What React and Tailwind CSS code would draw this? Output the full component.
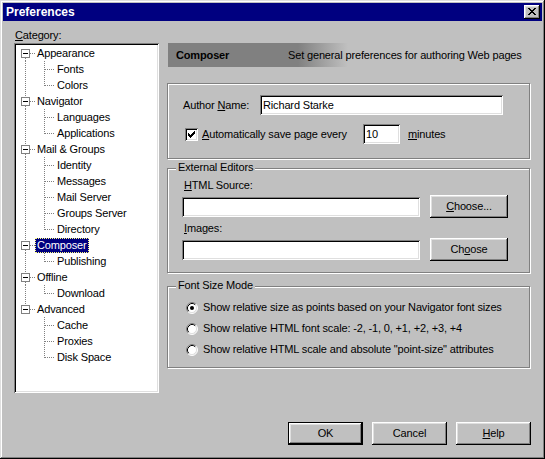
import React from "react";

// Win95 bevels
const raised =
  "shadow-[inset_-1px_-1px_#000,inset_1px_1px_#fff,inset_-2px_-2px_#808080,inset_2px_2px_#dfdfdf]";
const sunken =
  "shadow-[inset_1px_1px_#808080,inset_-1px_-1px_#fff,inset_2px_2px_#000,inset_-2px_-2px_#dfdfdf]";

const tree = [
  { label: "Appearance", children: ["Fonts", "Colors"] },
  { label: "Navigator", children: ["Languages", "Applications"] },
  { label: "Mail & Groups", children: ["Identity", "Messages", "Mail Server", "Groups Server", "Directory"] },
  { label: "Composer", children: ["Publishing"], selected: true },
  { label: "Offline", children: ["Download"] },
  { label: "Advanced", children: ["Cache", "Proxies", "Disk Space"] },
];

const CHECK = ["......#", ".....##", "#...###", "##.###.", "#####..", ".###...", "..#...."];
const CROSS = ["##....##", ".##..##.", "..####..", "...##...", "..####..", ".##..##.", "##....##"];

function Pixels({ rows, color = "#000", x = 0, y = 0 }) {
  return rows.flatMap((row, j) =>
    [...row].map((c, i) =>
      c === "#" ? <rect key={`${i}-${j}`} x={x + i} y={y + j} width="1" height="1" fill={color} /> : null
    )
  );
}

// small helper for an underlined access key
const U = ({ children }) => <span className="underline decoration-1 underline-offset-[1px]">{children}</span>;

function Dots({ x1, y1, x2, y2 }) {
  return <line x1={x1} y1={y1} x2={x2} y2={y2} stroke="#808080" strokeDasharray="1 1" shapeRendering="crispEdges" />;
}

function RootRow({ node, first, last }) {
  return (
    <div className="flex h-[16px] items-center">
      <svg width="19" height="16" className="shrink-0">
        {!first && <Dots x1={9.5} y1={0} x2={9.5} y2={4} />}
        {!last && <Dots x1={9.5} y1={13} x2={9.5} y2={16} />}
        <Dots x1={14} y1={8.5} x2={19} y2={8.5} />
        <rect x="5.5" y="4.5" width="8" height="8" fill="#fff" stroke="#808080" shapeRendering="crispEdges" />
        <rect x="7" y="8" width="5" height="1" fill="#000" />
      </svg>
      <span
        className={
          node.selected
            ? "h-[15px] px-[2px] leading-[15px] bg-[#000080] text-white outline outline-1 outline-dotted outline-[#ffff80] -outline-offset-1"
            : "h-[15px] px-[2px] leading-[15px]"
        }
      >
        {node.label}
      </span>
    </div>
  );
}

function ChildRow({ label, lastChild, lastRoot }) {
  return (
    <div className="flex h-[16px] items-center">
      <svg width="39" height="16" className="shrink-0">
        {!lastRoot && <Dots x1={9.5} y1={0} x2={9.5} y2={16} />}
        <Dots x1={28.5} y1={0} x2={28.5} y2={lastChild ? 9 : 16} />
        <Dots x1={29} y1={8.5} x2={38} y2={8.5} />
      </svg>
      <span className="h-[15px] px-[2px] leading-[15px]">{label}</span>
    </div>
  );
}

function Radio({ checked }) {
  return (
    <svg width="12" height="12" className="shrink-0">
      <circle cx="6" cy="6" r="5" fill="#fff" />
      <path d="M2.11 9.89 A5.5 5.5 0 0 1 9.89 2.11" fill="none" stroke="#808080" />
      <path d="M9.89 2.11 A5.5 5.5 0 0 1 2.11 9.89" fill="none" stroke="#fff" />
      <path d="M2.82 9.18 A4.5 4.5 0 0 1 9.18 2.82" fill="none" stroke="#000" />
      <path d="M9.18 2.82 A4.5 4.5 0 0 1 2.82 9.18" fill="none" stroke="#dfdfdf" />
      {checked && <circle cx="6" cy="6" r="2" fill="#000" />}
    </svg>
  );
}

function Button({ children, width = "w-[75px]", isDefault }) {
  return (
    <div
      className={
        isDefault
          ? `${width} h-[23px] flex items-center justify-center border border-black ${raised}`
          : `${width} h-[23px] flex items-center justify-center ${raised}`
      }
    >
      {children}
    </div>
  );
}

function Field({ width, value }) {
  return <div className={`${width} h-[20px] bg-white pl-[3px] flex items-center ${sunken}`}>{value}</div>;
}

function Group({ title, className, children }) {
  return (
    <div className={`relative border border-[#808080] shadow-[inset_1px_1px_#fff,1px_1px_#fff] ${className}`}>
      {title && <span className="absolute left-[8px] top-[-8px] bg-[#c0c0c0] px-[2px]">{title}</span>}
      {children}
    </div>
  );
}

export default function App() {
  return (
    <div className="w-[545px] h-[459px] bg-[#c0c0c0] p-[3px] flex flex-col font-['Liberation_Sans',Arial,sans-serif] text-[11px] leading-[13px] tracking-[-0.15px] text-black shadow-[inset_-1px_-1px_#000,inset_1px_1px_#dfdfdf,inset_-2px_-2px_#808080,inset_2px_2px_#fff]">
      {/* title bar */}
      <div className="h-[18px] shrink-0 bg-[#000080] flex items-center justify-between pl-[3px] pr-[2px]">
        <span className="text-white font-bold text-[12px] tracking-normal">Preferences</span>
        <div className={`w-[16px] h-[14px] bg-[#c0c0c0] ${raised}`}>
          <svg width="16" height="14">
            <Pixels rows={CROSS} x={4} y={3} />
          </svg>
        </div>
      </div>

      <div className="flex pl-[11px] pt-[8px]">
        {/* category tree */}
        <div className="w-[145px] shrink-0">
          <div className="ml-px">
            <U>C</U>ategory:
          </div>
          <div className={`mt-px h-[350px] bg-white pt-[2px] pl-[2px] ${sunken}`}>
            {tree.map((node, i) => (
              <React.Fragment key={node.label}>
                <RootRow node={node} first={i === 0} last={i === tree.length - 1} />
                {node.children.map((c, j) => (
                  <ChildRow
                    key={c}
                    label={c}
                    lastChild={j === node.children.length - 1}
                    lastRoot={i === tree.length - 1}
                  />
                ))}
              </React.Fragment>
            ))}
          </div>
        </div>

        {/* composer panel */}
        <div className="ml-[8px] w-[363px] shrink-0 pt-[14px]">
          <div className="ml-px h-[24px] flex items-center bg-[linear-gradient(to_right,#808080_130px,#c0c0c0_180px)]">
            <span className="w-[120px] pl-[8px] font-bold">Composer</span>
            <span>Set general preferences for authoring Web pages</span>
          </div>

          <Group className="mt-[16px] h-[76px] pt-[11px] pl-[15px]">
            <div className="flex items-center h-[20px]">
              <span className="w-[77px]">
                Author <U>N</U>ame:
              </span>
              <Field width="w-[243px]" value="Richard Starke" />
            </div>
            <div className="flex items-center h-[20px] mt-[9px]">
              <div className="ml-[2px] w-[178px] flex items-center">
                <div className={`w-[13px] h-[13px] bg-white shrink-0 ${sunken}`}>
                  <svg width="13" height="13">
                    <Pixels rows={CHECK} x={3} y={3} />
                  </svg>
                </div>
                <span className="ml-[4px]">
                  <U>A</U>utomatically save page every
                </span>
              </div>
              <Field width="w-[37px]" value="10" />
              <span className="ml-[8px]">
                <U>m</U>inutes
              </span>
            </div>
          </Group>

          <Group title="External Editors" className="mt-[9px] h-[105px] pt-[10px] pl-[14px]">
            <div className="ml-[2px]">
              <U>H</U>TML Source:
            </div>
            <div className="flex items-center mt-[3px]">
              <Field width="w-[238px]" value="" />
              <div className="ml-[10px]">
                <Button width="w-[78px]">
                  <U>C</U>hoose...
                </Button>
              </div>
            </div>
            <div className="ml-[2px] mt-[4px]">
              <U>I</U>mages:
            </div>
            <div className="flex items-center mt-[3px]">
              <Field width="w-[238px]" value="" />
              <div className="ml-[10px]">
                <Button width="w-[78px]">
                  Ch<U>o</U>ose
                </Button>
              </div>
            </div>
          </Group>

          <Group title="Font Size Mode" className="mt-[13px] h-[82px] pt-[10px] pl-[18px]">
            {[
              "Show relative size as points based on your Navigator font sizes",
              "Show relative HTML font scale: -2, -1, 0, +1, +2, +3, +4",
              'Show relative HTML scale and absolute "point-size" attributes',
            ].map((t, i) => (
              <div key={t} className="flex items-center h-[21px]">
                <Radio checked={i === 0} />
                <span className="ml-[5px]">{t}</span>
              </div>
            ))}
          </Group>
        </div>
      </div>

      <div className="flex justify-end gap-[9px] pr-[11px] mt-[29px]">
        <Button isDefault>OK</Button>
        <Button>Cancel</Button>
        <Button>
          <U>H</U>elp
        </Button>
      </div>
    </div>
  );
}
